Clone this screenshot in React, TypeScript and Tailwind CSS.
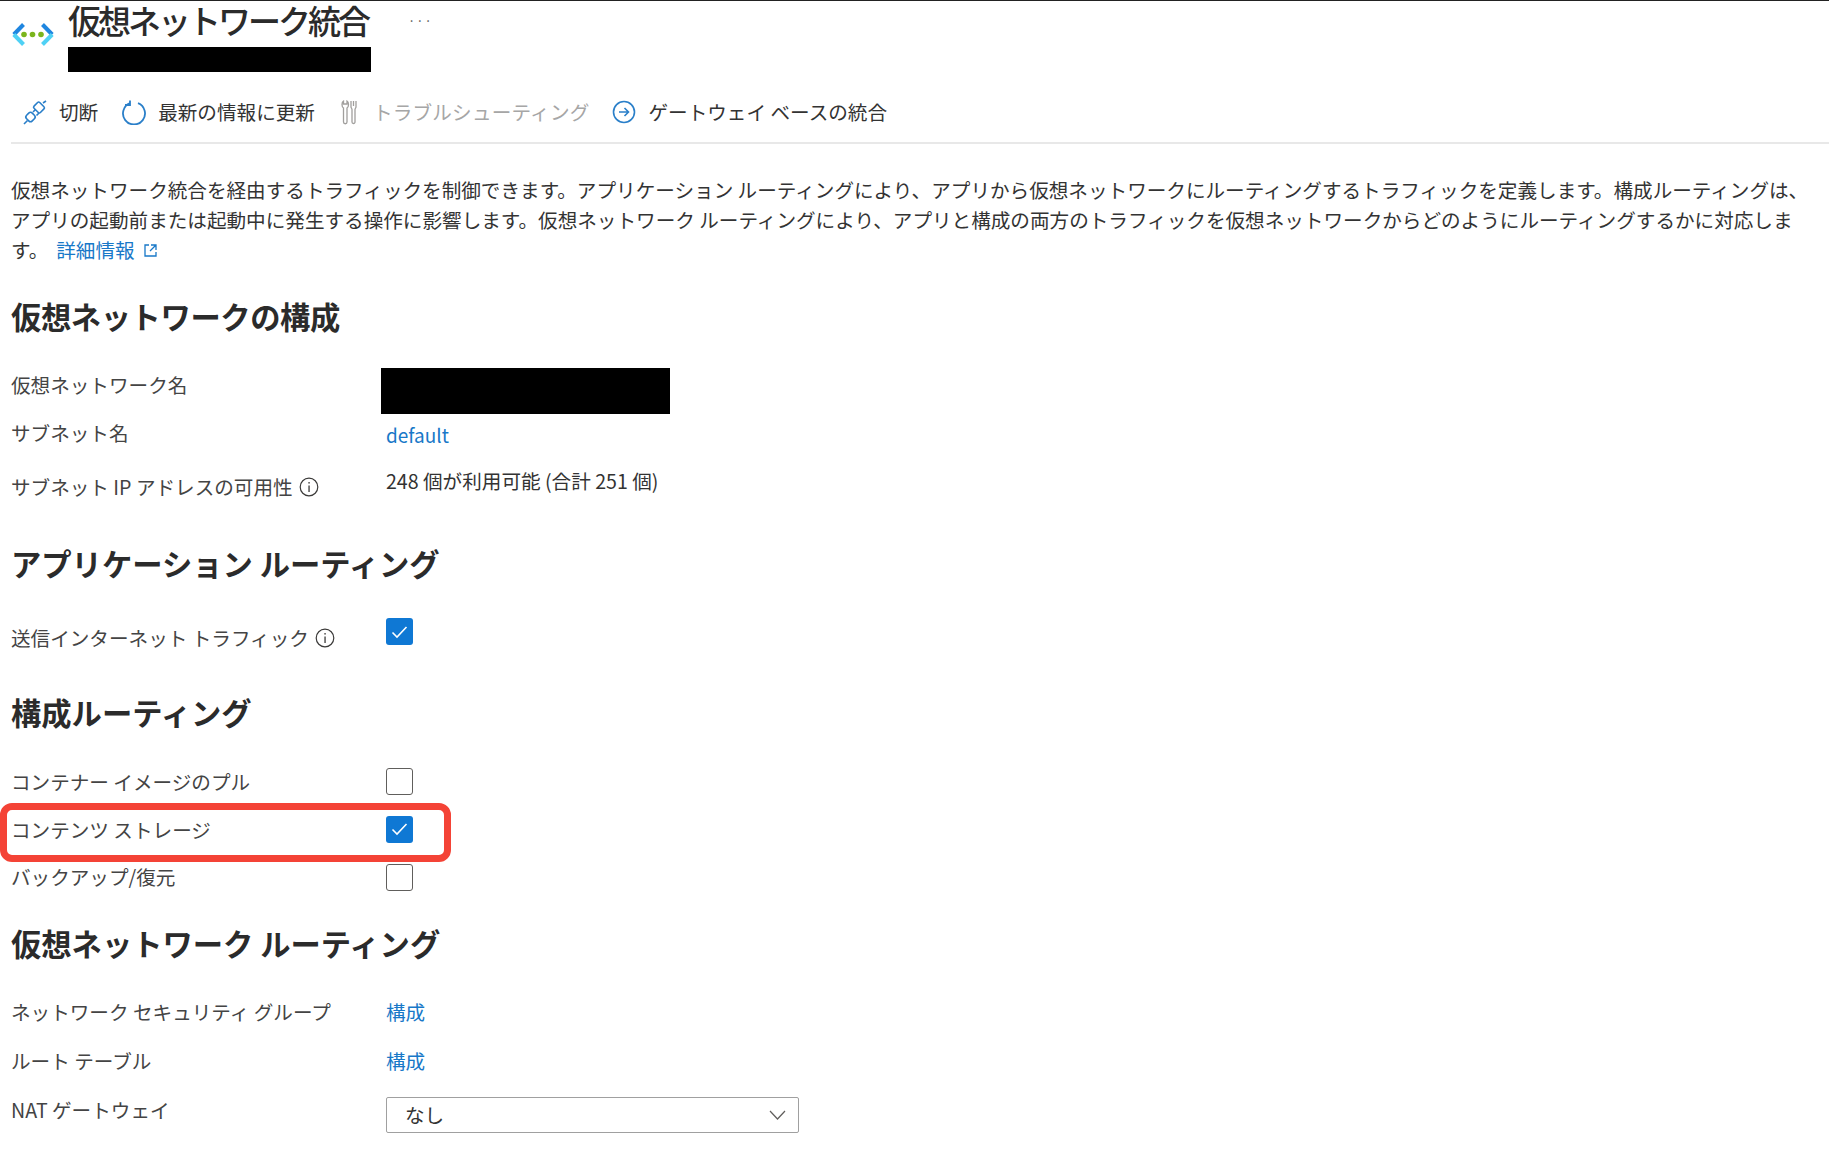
import { ReactNode } from 'react';

function InfoIcon() {
  return (
    <svg width="20" height="20" viewBox="0 0 20 20" fill="none" className="ml-[6px] shrink-0">
      <circle cx="10" cy="10" r="8.8" stroke="#3b3a39" strokeWidth="1.2" />
      <rect x="9.4" y="8.5" width="1.3" height="6.5" fill="#3b3a39" />
      <rect x="9.4" y="5" width="1.3" height="1.6" fill="#3b3a39" />
    </svg>
  );
}

function Check({ checked }: { checked?: boolean }) {
  return checked ? (
    <span className="flex h-[27px] w-[27px] items-center justify-center rounded-[3px] bg-[#0f78d4]">
      <svg width="17" height="14" viewBox="0 0 17 14" fill="none">
        <path d="M1.5 7.5 L6 12 L15.5 2" stroke="white" strokeWidth="1.6" />
      </svg>
    </span>
  ) : (
    <span className="block h-[27px] w-[27px] rounded-[3px] border border-[#605e5c] bg-white" />
  );
}

function Heading({ children, className }: { children: ReactNode; className: string }) {
  return <h2 className={`h-[40px] text-[30.3px] leading-[40px] font-bold whitespace-nowrap text-[#2b2b2b] ${className}`}>{children}</h2>;
}

function Row({ label, value, className, labelClass = '', valueClass = '' }: {
  label: ReactNode; value: ReactNode; className: string; labelClass?: string; valueClass?: string;
}) {
  return (
    <div className={`grid grid-cols-[375px_1fr] ${className}`}>
      <div className={`flex items-center text-[#444] ${labelClass}`}>{label}</div>
      <div className={valueClass}>{value}</div>
    </div>
  );
}

export default function App() {
  return (
    <div className="h-[1166px] w-[1829px] overflow-hidden border-t border-[#222] bg-white font-['Noto_Sans_CJK_JP','Noto_Sans',sans-serif] text-[19.6px] leading-[30px] text-[#333]">
      {/* header */}
      <div className="flex h-[89px] pl-[11px]">
        <svg width="44" height="30" viewBox="0 0 44 30" fill="none" className="mt-[19px] shrink-0">
          <path d="M12.5 4.5 L2.8 14.5" stroke="#1f86e0" strokeWidth="4" />
          <path d="M2.8 14.5 L12.5 24.5" stroke="#4fd1f5" strokeWidth="4" />
          <path d="M31.5 4.5 L41.2 14.5" stroke="#1f86e0" strokeWidth="4" />
          <path d="M41.2 14.5 L31.5 24.5" stroke="#4fd1f5" strokeWidth="4" />
          <circle cx="13" cy="14.5" r="2.8" fill="#7ab51d" />
          <circle cx="21.5" cy="14.5" r="2.8" fill="#7ab51d" />
          <circle cx="30" cy="14.5" r="2.8" fill="#7ab51d" />
        </svg>
        <div className="ml-[13px] w-[303px]">
          <div className="h-[46px] text-[33px] leading-[38px] font-medium tracking-[-3px] whitespace-nowrap text-[#2b2b2b]">仮想ネットワーク統合</div>
          <div className="h-[25px] bg-black" />
        </div>
        <span className="mt-[5px] ml-[37px] text-[13px] leading-[30px] tracking-[1px] text-[#555]">···</span>
      </div>

      {/* toolbar */}
      <div className="ml-[11px] flex h-[54px] items-center border-b-2 border-[#e8e8e8] pb-[8px] pl-[12px] whitespace-nowrap">
        <svg width="24" height="25" viewBox="0 0 24 25" fill="none" stroke="#2a7fc9" strokeWidth="1.6" className="shrink-0">
          <path d="M1 24 L4.5 20.5" />
          <rect x="3.5" y="13" width="8" height="8" rx="2.5" transform="rotate(45 7.5 17)" />
          <path d="M10 12 L12.5 9.5 M13.5 15.5 L16 13" />
          <rect x="11.5" y="3.5" width="9" height="8" rx="1.5" transform="rotate(45 16 7.5)" />
          <path d="M20 3 L23 1" />
        </svg>
        <span className="ml-[12px]">切断</span>
        <svg width="24" height="25" viewBox="0 0 24 25" fill="none" stroke="#2a7fc9" strokeWidth="1.8" className="ml-[24px] shrink-0">
          <path d="M16 3.2 A11 11 0 1 1 8 3.2" />
          <path d="M8 0.5 V5 H3" />
        </svg>
        <span className="ml-[12px]">最新の情報に更新</span>
        <svg width="16" height="25" viewBox="0 0 16 25" fill="none" stroke="#a19f9d" strokeWidth="1.3" className="ml-[26px] shrink-0">
          <path d="M2.5 1 C0.5 2 0.5 7 2.5 8 V22 A1.7 1.7 0 0 0 6 22 V8 C8 7 8 2 6 1 V4 H2.5 Z" />
          <path d="M10 1 V7 C10 8 11 8.5 11 9.5 V22 A1.5 1.5 0 0 0 14 22 V9.5 C14 8.5 15 8 15 7 V1 M12.5 1 V6" />
        </svg>
        <span className="ml-[16px] tracking-[0.2px] text-[#a6a6a6]">トラブルシューティング</span>
        <svg width="24" height="24" viewBox="0 0 24 24" fill="none" stroke="#2a7fc9" strokeWidth="1.6" className="ml-[22px] shrink-0">
          <circle cx="12" cy="12" r="10.5" />
          <path d="M7 12 H16.5 M12.5 8 L16.5 12 L12.5 16" />
        </svg>
        <span className="ml-[13px]">ゲートウェイ ベースの統合</span>
      </div>

      <main className="pl-[11px]">
        <p className="mt-[31px] whitespace-nowrap text-[#333]">
          仮想ネットワーク統合を経由するトラフィックを制御できます。アプリケーション ルーティングにより、アプリから仮想ネットワークにルーティングするトラフィックを定義します。構成ルーティングは、
          <br />
          アプリの起動前または起動中に発生する操作に影響します。仮想ネットワーク ルーティングにより、アプリと構成の両方のトラフィックを仮想ネットワークからどのようにルーティングするかに対応しま
          <br />
          す。
          <a className="ml-[8px] inline-flex items-center text-[#1878c8]">
            詳細情報
            <svg width="15" height="15" viewBox="0 0 15 15" fill="none" stroke="#1878c8" strokeWidth="1.3" className="ml-[8px]">
              <path d="M6 2 H2 V13 H13 V9" />
              <path d="M8 2 H13 V7 M13 2 L7 8" />
            </svg>
          </a>
        </p>

        <Heading className="mt-[31px] tracking-[-0.4px]">仮想ネットワークの構成</Heading>
        <Row className="mt-[34px] h-[48px]" label="仮想ネットワーク名" labelClass="self-start" value={<div className="-mt-[2px] h-[46px] w-[289px] bg-black" />} valueClass="-ml-[5px]" />
        <Row className="h-[48px]" label="サブネット名" value={<a className="text-[19px] text-[#1878c8]">default</a>} valueClass="pt-[2px]" labelClass="self-start" />
        <Row
          className="h-[77px]"
          label={<>サブネット IP アドレスの可用性<InfoIcon /></>}
          value="248 個が利用可能 (合計 251 個)"
          labelClass="self-start pt-[6px]"
        />

        <Heading className="">アプリケーション ルーティング</Heading>
        <Row
          className="mt-[35px] h-[74px]"
          label={<>送信インターネット トラフィック<InfoIcon /></>}
          value={<Check checked />}
          labelClass="self-start pt-[5px]"
        />

        <Heading className="">構成ルーティング</Heading>
        <div className="relative mt-[25px]">
          <Row className="h-[48px] items-center" labelClass="pt-[2px]" label="コンテナー イメージのプル" value={<div className="flex"><Check /></div>} />
          <Row className="h-[48px] items-center" labelClass="pt-[2px]" label="コンテンツ ストレージ" value={<div className="flex"><Check checked /></div>} />
          <Row className="h-[48px] items-center" label="バックアップ/復元" value={<div className="flex"><Check /></div>} />
          {/* red callout over the second row */}
          <div className="absolute top-[46px] -left-[11px] h-[59px] w-[451px] rounded-[12px] border-[7px] border-[#f44336]" />
        </div>

        <Heading className="mt-[22px]">仮想ネットワーク ルーティング</Heading>
        <Row className="mt-[34px] h-[49px]" label="ネットワーク セキュリティ グループ" value={<a className="text-[#1878c8]">構成</a>} labelClass="self-start" />
        <Row className="h-[49px]" label="ルート テーブル" value={<a className="text-[#1878c8]">構成</a>} labelClass="self-start" />
        <Row
          className="h-[40px]"
          label="NAT ゲートウェイ"
          labelClass="self-start"
          valueClass="pt-[2px]"
          value={
            <div className="flex h-[36px] w-[413px] items-center justify-between rounded-[2px] border border-[#a0a0a0] pr-[12px] pl-[18px]">
              <span>なし</span>
              <svg width="17" height="10" viewBox="0 0 17 10" fill="none" stroke="#605e5c" strokeWidth="1.2">
                <path d="M1 1 L8.5 9 L16 1" />
              </svg>
            </div>
          }
        />
      </main>
    </div>
  );
}
